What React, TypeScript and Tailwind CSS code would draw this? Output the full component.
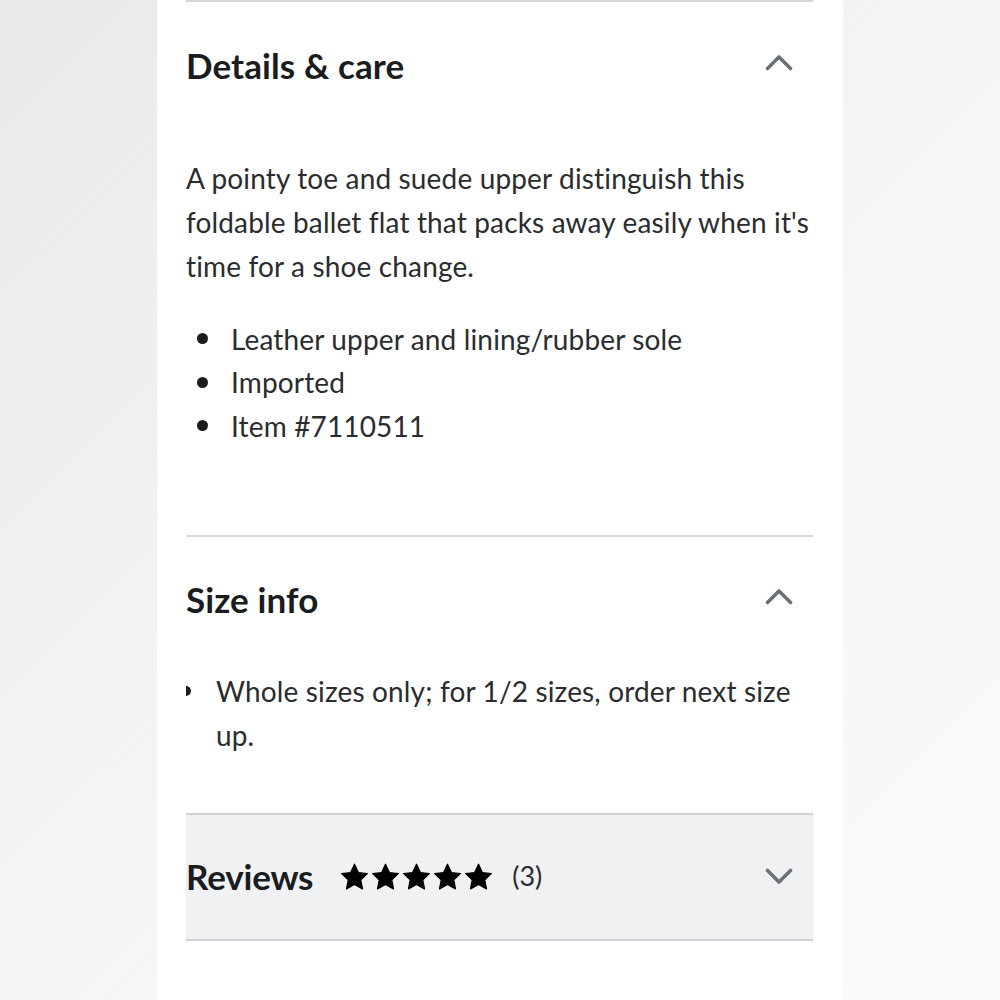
import React from 'react';

const font = { fontFamily: 'Lato, "Noto Sans", sans-serif' };

const Chevron = ({ up }: { up: boolean }) => (
  <svg width="28" height="17" viewBox="0 0 28 17" fill="none">
    <path
      d={up ? 'M2.5 14.5 L14 3 L25.5 14.5' : 'M2.5 2.5 L14 14 L25.5 2.5'}
      stroke="#6b7177"
      strokeWidth="3.6"
      strokeLinecap="round"
      strokeLinejoin="round"
    />
  </svg>
);

const Star = () => (
  <svg width="31" height="30" viewBox="0 0 24 24">
    <path
      d="M12 1.8l3.1 6.6 7.2.9-5.3 5 1.4 7.2L12 18l-6.4 3.5L7 14.3l-5.3-5 7.2-.9z"
      fill="#000"
      stroke="#000"
      strokeWidth="1"
      strokeLinejoin="round"
    />
  </svg>
);

const details = ['Leather upper and lining/rubber sole', 'Imported', 'Item #7110511'];

export default function App() {
  return (
    <div
      className="w-[1000px] h-[1000px] flex justify-center bg-gradient-to-br from-[#e9e9e9] via-[#f5f5f5] to-[#fafafa] overflow-hidden"
      style={font}
    >
      <div className="w-[686px] h-full bg-white pl-[29px] pr-[30px]">
        {/* Details & care */}
        <div className="border-t-2 border-[#d4d6d8]">
          <div className="h-[126px] flex items-center justify-between">
            <h2 className="text-[35px] font-bold text-[#1b1c1e] tracking-[0.1px]">Details &amp; care</h2>
            <div className="mr-[20px] -mt-[6px]">
              <Chevron up />
            </div>
          </div>
          <p className="mt-[28px] text-[28px] leading-[44px] text-[#2b2c2f] tracking-[0.15px]">
            A pointy toe and suede upper distinguish this foldable ballet flat that packs away easily when it's time for
            a shoe change.
          </p>
          <ul className="mt-[29px] pb-[87px]">
            {details.map((d) => (
              <li key={d} className="flex items-center h-[43.5px] text-[28px] text-[#2b2c2f] tracking-[0.15px]">
                <span className="w-[11px] h-[11px] rounded-full bg-[#1b1c1e] ml-[11px] mr-[23px] shrink-0" />
                {d}
              </li>
            ))}
          </ul>
        </div>

        {/* Size info */}
        <div className="border-t-2 border-[#d4d6d8]">
          <div className="h-[126px] flex items-center justify-between">
            <h2 className="text-[35px] font-bold text-[#1b1c1e] tracking-[0.1px]">Size info</h2>
            <div className="mr-[20px] -mt-[6px]">
              <Chevron up />
            </div>
          </div>
          <div className="flex mt-[6px] pb-[56px]">
            <div className="w-[5px] h-[44px] flex items-center overflow-hidden mr-[25px] shrink-0">
              <span className="w-[10px] h-[10px] rounded-full bg-[#1b1c1e] -ml-[5px] shrink-0" />
            </div>
            <p className="text-[28px] leading-[44px] text-[#2b2c2f] tracking-[0.15px]">
              Whole sizes only; for 1/2 sizes, order next size up.
            </p>
          </div>
        </div>

        {/* Reviews */}
        <div className="border-y-2 border-[#cfd2d5] bg-[#f0f1f3] h-[128px] flex items-center justify-between">
          <div className="flex items-center">
            <h2 className="text-[35px] font-bold text-[#1b1c1e] tracking-[-0.2px]">Reviews</h2>
            <div className="flex ml-[26px]">
              <Star />
              <Star />
              <Star />
              <Star />
              <Star />
            </div>
            <span className="ml-[18px] text-[27px] text-[#2b2c2f]">(3)</span>
          </div>
          <div className="mr-[20px]">
            <Chevron up={false} />
          </div>
        </div>
      </div>
    </div>
  );
}
